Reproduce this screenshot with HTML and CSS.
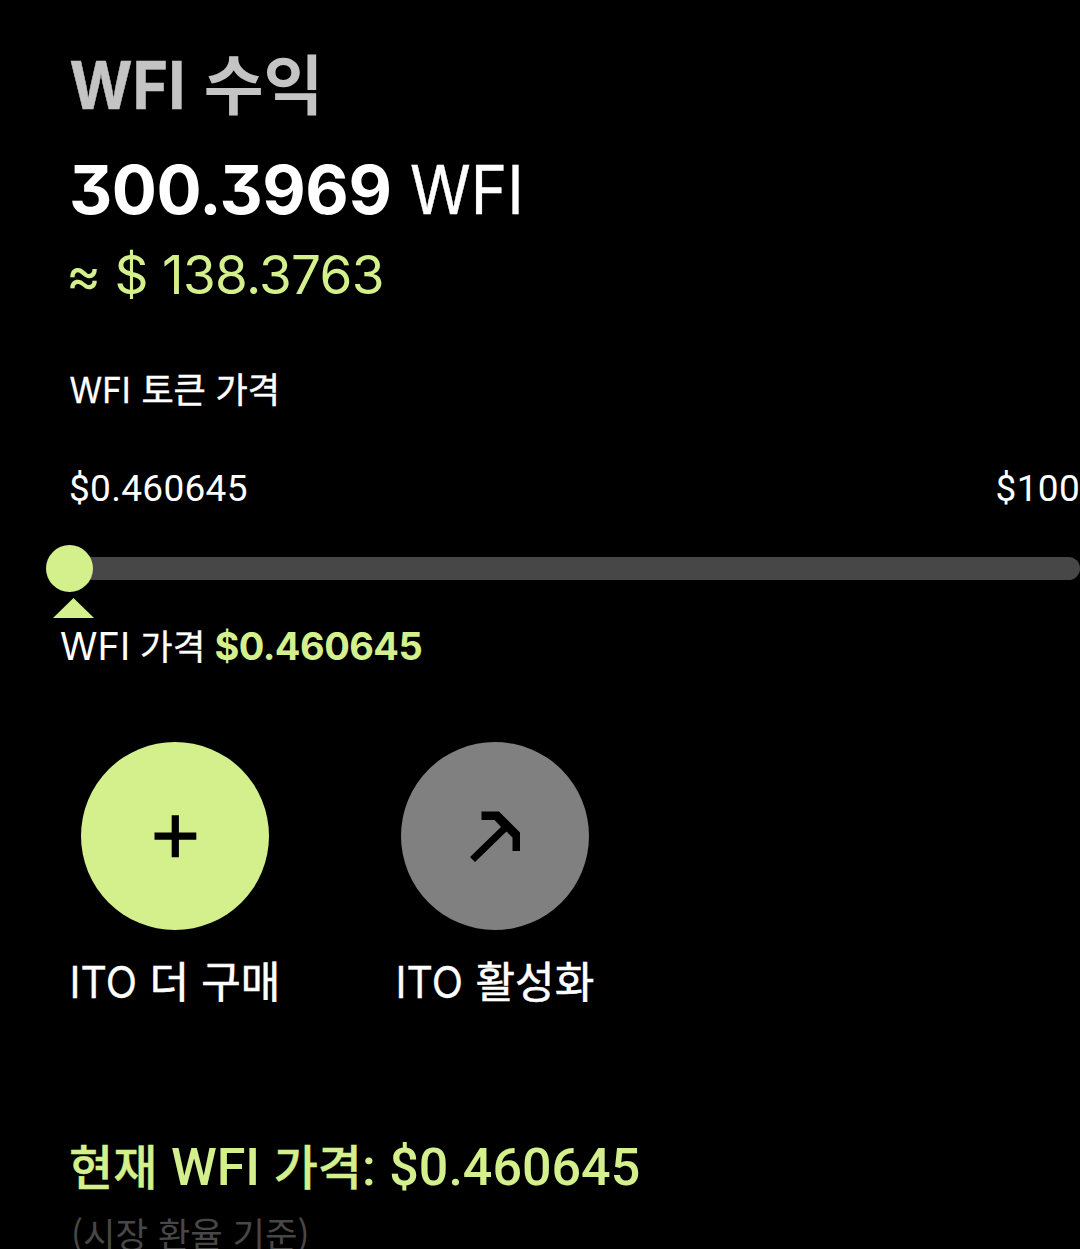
FILE: index.html
```html
<!DOCTYPE html>
<html lang="ko">
<head>
<meta charset="utf-8">
<title>WFI 수익</title>
<link rel="stylesheet" href="styles.css">
</head>
<body>
<main class="panel">
  <h1 class="row title"><span class="lat">WFI</span><span class="ko">수익</span></h1>
  <div class="row amount"><strong class="num">300.3969</strong><span class="unit">WFI</span></div>
  <div class="row usd">≈ $ 138.3763</div>
  <div class="row label"><span class="lat">WFI</span><span class="ko">토큰 가격</span></div>
  <div class="row range"><span>$0.460645</span><span>$100</span></div>
  <div class="slider"><div class="track"></div><div class="thumb"></div></div>
  <div class="pointer"></div>
  <div class="row price"><span class="lat">WFI</span><span class="ko">가격</span><strong class="num">$0.460645</strong></div>
  <div class="actions">
    <div class="action buy">
      <button class="circle" aria-label="ITO 더 구매"><svg viewBox="0 0 188 188"><path d="M73.500 94.200H115.300M94.300 73.200V115.200" stroke="#000" stroke-width="7.200"/></svg></button>
      <div class="row caption"><span class="lat">ITO</span><span class="ko">더 구매</span></div>
    </div>
    <div class="action activate">
      <button class="circle" aria-label="ITO 활성화"><svg viewBox="0 0 188 188"><path d="M80.500 69.500H98L119 90.500V109H111.500V95.500L105.500 89.500L74 120L69 115L100 85L93.500 78H80.500Z"/></svg></button>
      <div class="row caption"><span class="lat">ITO</span><span class="ko">활성화</span></div>
    </div>
  </div>
  <div class="row current"><span class="ko">현재</span><span class="lat">WFI</span><span><span class="ko">가격</span>:</span><span class="num">$0.460645</span></div>
  <div class="row note">(시장 환율 기준)</div>
</main>
</body>
</html>
```
FILE: styles.css
```css
* { box-sizing: border-box; }
html { height: 100%; overflow: hidden; }
body {
  margin: 0;
  height: 1249px;
  overflow: hidden;
  background: #000;
  color: #fff;
  font-family: Inter, "Noto Sans CJK KR", sans-serif;
}
.panel { padding: 41px 0 0 69px; }
.row { display: flex; align-items: baseline; white-space: pre; }
.ko { font-family: "Noto Sans CJK KR", sans-serif; }
.lat, .unit { transform-origin: 0 50%; }

.title { margin: 0; height: 80px; line-height: 80px; font-size: 66px; font-weight: 700; color: #c4c4c4; gap: 8px; }
.title .lat { transform: translateX(.5px) scaleX(.92); -webkit-text-stroke: .5px; }
.title .ko { margin-left: 1px; font-size: 65px; }
.amount { margin-top: 29px; height: 80px; line-height: 80px; font-size: 67px; gap: 19px; }
.amount .num { letter-spacing: -.5px; font-feature-settings: "cv09" 1; }
.amount .unit { font-weight: 400; transform: scaleX(.92); -webkit-text-stroke: .4px; }
.usd { margin: 15px 0 0 -3px; height: 60px; line-height: 60px; font-size: 53px; letter-spacing: -.7px; color: #d4f08c; }
.label { margin-top: 58px; height: 50px; line-height: 50px; font-size: 36px; gap: 6px; }
.label .lat { transform: translateX(.5px) scaleX(.92); -webkit-text-stroke: .3px; }
.label .ko { font-size: 35px; -webkit-text-stroke: .5px; }
.range { margin-top: 51px; height: 50px; line-height: 50px; justify-content: space-between; font-family: Roboto, sans-serif; font-size: 37px; letter-spacing: .3px; }

.slider { display: flex; align-items: center; height: 47px; margin: 31px 0 0 -23px; }
.track { order: 2; flex: 1; height: 23px; margin-left: -24px; border-radius: 0 12px 12px 0; background: #474747; }
.thumb { order: 1; width: 47px; height: 47px; border-radius: 50%; background: #d4f08c; z-index: 1; }
.pointer { width: 41px; height: 20px; margin: 6px 0 0 -16px; background: #d4f08c; clip-path: polygon(50% 0, 100% 100%, 0 100%); }
.price { margin: 2px 0 0 -9px; height: 50px; line-height: 50px; font-size: 38px; gap: 10px; }
.price .ko { font-size: 35.5px; -webkit-text-stroke: .3px; }
.price .num { margin-left: -1px; color: #d4f08c; font-weight: 700; letter-spacing: -.55px; }

.actions { display: flex; margin-top: 72px; }
.action { width: 326px; }
.circle { display: block; width: 188px; height: 188px; padding: 0; border: 0; border-radius: 50%; }
.circle svg { display: block; width: 188px; height: 188px; }
.buy .circle { margin-left: 12px; background: #d4f08c; }
.activate .circle { margin-left: 6px; background: #808080; }
.caption { margin-top: 19px; height: 60px; line-height: 60px; font-size: 44px; gap: 8px; }
.caption .lat { transform: translateX(.5px) scaleX(.93); -webkit-text-stroke: .3px; }
.caption .ko { font-size: 43px; -webkit-text-stroke: .6px; }

.current { margin-top: 120px; height: 70px; line-height: 70px; font-family: Roboto, sans-serif; font-size: 52px; font-weight: 500; color: #d4f08c; gap: 13.6px; }
.current .ko { font-size: 48px; -webkit-text-stroke: .4px; }
.note { margin: 9px 0 0 2px; height: 50px; line-height: 50px; font-family: "Noto Sans CJK KR", sans-serif; font-size: 35.3px; color: #474747; }
```
